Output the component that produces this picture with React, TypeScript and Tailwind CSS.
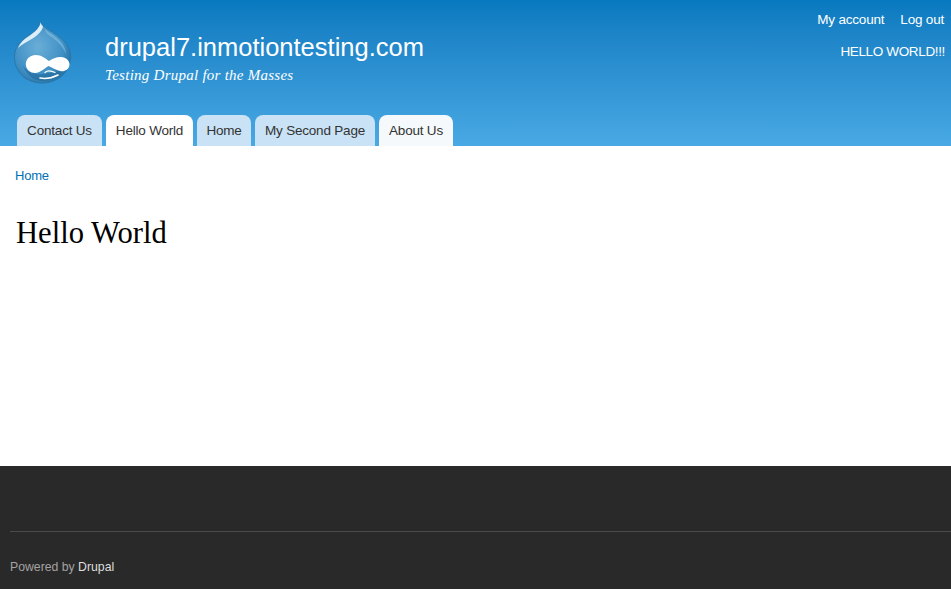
export default function App() {
  const tabs = [
    { label: "Contact Us", w: "w-[85px]", bg: "bg-[#c9e2f5]" },
    { label: "Hello World", w: "w-[87px]", bg: "bg-white" },
    { label: "Home", w: "w-[54px]", bg: "bg-[#c9e2f5]" },
    { label: "My Second Page", w: "w-[120px]", bg: "bg-[#c9e2f5]" },
    { label: "About Us", w: "w-[74px]", bg: "bg-[#f5f9fc]" },
  ];
  return (
    <div className="w-[951px] h-[589px] flex flex-col overflow-hidden bg-white font-['Liberation_Sans',Arial,sans-serif]">
      <header className="h-[146px] shrink-0 flex flex-col bg-gradient-to-b from-[#0779bf] to-[#48a9e4] text-white">
        <div className="h-[115px] flex justify-between">
          <div className="flex pl-[14px] pt-[20px]">
            <svg width="58" height="65" viewBox="0 0 58 65" className="shrink-0">
              <defs>
                <radialGradient id="d" cx="0.42" cy="0.42" r="0.65">
                  <stop offset="0" stopColor="#6aaed8" />
                  <stop offset="0.7" stopColor="#3f8fc4" />
                  <stop offset="1" stopColor="#246f9f" />
                </radialGradient>
              </defs>
              <path d="M26.700 .5C26.500 4 30 7 35 10C47 17 56.700 25 56.700 36C56.700 52 44 63 28 63C12 63 .5 52 .5 37C.5 26 8 19 16 15C22 11 27 6 26.700 .5Z" fill="url(#d)" stroke="#2a78ab" strokeWidth="1" />
              <path d="M26.500 2C26.500 7 21 12 15 16C10 19 6 23 4 28C8 24 12 22.500 16 20C22 16.500 28 12 29 6.500C28 5.500 27 4 26.500 2Z" fill="#dceff9" />
              <path d="M31 9C35 13 42 16 47 22C50 26 52 30 52 34C49 26 42 20 36 16C33 14 31 12 31 9Z" fill="#8cc3e3" opacity="0.55" />
              <path d="M9 46C13 56 21 61 29 61C38 61 47 55 52 46C46 52 38 53 29 54C21 55 13 51 9 46Z" fill="#22699b" opacity="0.6" />
              <path d="M12 46C11 40 15 35 22 35C27 35 31 38 35 41C38 39 42 37 47 37C52 37 56 41 55.500 45C55 50 50 52 46 51C42 50 38 47.500 34.500 46C31 48 27 52.500 21 53C16 53 13 50 12 46Z" fill="#ffffff" />
              <path d="M31 52.500C33 50.500 37 50.500 41 52.500" fill="none" stroke="#ffffff" strokeWidth="1.200" strokeLinecap="round" />
              <path d="M26 58C31 59 38 58 44 55" fill="none" stroke="#ffffff" strokeWidth="1.600" strokeLinecap="round" />
            </svg>
            <div className="ml-[33px] pt-[13px]">
              <div className="text-[25.5px] leading-[29px]">drupal7.inmotiontesting.com</div>
              <div className="text-[15px] leading-[18px] mt-[4px] italic font-['Liberation_Serif',Georgia,serif] tracking-[0.25px]">Testing Drupal for the Masses</div>
            </div>
          </div>
          <div className="flex flex-col items-end pr-[6px] text-[13.5px] tracking-[-0.2px]">
            <div className="flex gap-4 pt-[11px] pr-[1px] leading-[18px]">
              <span>My account</span>
              <span>Log out</span>
            </div>
            <div className="mt-[14px] leading-[18px] tracking-[-0.35px]">HELLO WORLD!!!</div>
          </div>
        </div>
        <nav className="h-[31px] flex gap-1 pl-[17px] text-[13.5px] tracking-[-0.2px] text-[#333333]">
          {tabs.map((t) => (
            <div key={t.label} className={`${t.w} ${t.bg} rounded-t-[8px] flex items-center justify-center pt-px`}>
              {t.label}
            </div>
          ))}
        </nav>
      </header>
      <main className="flex-1 pl-[15px]">
        <div className="pt-[21px] text-[13px] tracking-[-0.2px] leading-[18px] text-[#0071b3]">Home</div>
        <h1 className="mt-[27px] text-[30.6px] leading-[42px] font-normal text-black font-['Liberation_Serif',serif] pl-px">Hello World</h1>
      </main>
      <footer className="h-[123px] shrink-0 bg-[#292929] pl-[10px]">
        <div className="mt-[65px] border-t border-[#4a4a4a]" />
        <div className="mt-[26px] text-[12.25px] leading-[18px] text-[#a3a3a3]">
          Powered by <span className="text-[#dddddd]">Drupal</span>
        </div>
      </footer>
    </div>
  );
}
